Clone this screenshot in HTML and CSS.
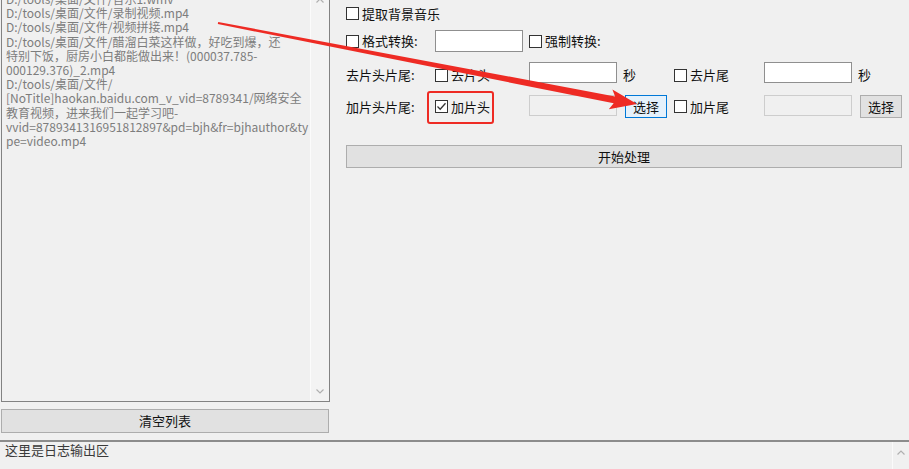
FILE: index.html
```html
<!DOCTYPE html>
<html lang="zh-CN">
<head>
  <meta charset="UTF-8">
  <meta name="viewport" content="width=device-width, initial-scale=1.0">
  <title>视频处理工具</title>
  <link rel="stylesheet" href="styles.css">
</head>
<body>
  <div class="main">
    <div class="left">
      <div class="listbox">
        <div class="list">
          <div class="items">
            <div>D:/tools/桌面/文件/音乐1.wmv</div>
            <div>D:/tools/桌面/文件/录制视频.mp4</div>
            <div>D:/tools/桌面/文件/视频拼接.mp4</div>
            <div>D:/tools/桌面/文件/醋溜白菜这样做，好吃到爆，还</div>
            <div>特别下饭，厨房小白都能做出来！(000037.785-</div>
            <div>000129.376)_2.mp4</div>
            <div>D:/tools/桌面/文件/</div>
            <div>[NoTitle]haokan.baidu.com_v_vid=8789341/网络安全</div>
            <div>教育视频，进来我们一起学习吧-</div>
            <div>vvid=8789341316951812897&amp;pd=bjh&amp;fr=bjhauthor&amp;ty</div>
            <div>pe=video.mp4</div>
          </div>
        </div>
        <div class="vscroll">
          <svg class="chev up" width="8" height="5" viewBox="0 0 8 5"><polyline points="0.5,4.5 4,1 7.5,4.5" /></svg>
          <svg class="chev down" width="8" height="5" viewBox="0 0 8 5"><polyline points="0.5,0.5 4,4 7.5,0.5" /></svg>
        </div>
      </div>
      <button class="btn clear">清空列表</button>
    </div>

    <div class="right">
      <div class="row r1">
        <label class="check span3"><span class="box"></span>提取背景音乐</label>
      </div>
      <div class="row r2">
        <label class="check"><span class="box"></span>格式转换:</label>
        <span class="txt"></span>
        <label class="check span2"><span class="box"></span>强制转换:</label>
      </div>
      <div class="row r3">
        <span class="lbl">去片头片尾:</span>
        <label class="check"><span class="box"></span>去片头</label>
        <span class="txt"></span>
        <span class="lbl">秒</span>
        <label class="check"><span class="box"></span>去片尾</label>
        <span class="txt"></span>
        <span class="lbl">秒</span>
      </div>
      <div class="row r4">
        <span class="lbl">加片头片尾:</span>
        <label class="check"><span class="box on"><svg width="11" height="11" viewBox="0 0 11 11"><polyline points="1.5,5.5 4.2,8.2 9.5,2.2" /></svg></span>加片头</label>
        <span class="txt off"></span>
        <button class="btn pick hot">选择</button>
        <label class="check"><span class="box"></span>加片尾</label>
        <span class="txt off"></span>
        <button class="btn pick">选择</button>
        <span class="mark"></span>
      </div>
      <button class="btn start">开始处理</button>
    </div>
  </div>

  <div class="log">
    <div class="log-text">这里是日志输出区</div>
    <div class="log-scroll">
      <svg class="chev up" width="8" height="5" viewBox="0 0 8 5"><polyline points="0.5,4.5 4,1 7.5,4.5" /></svg>
    </div>
  </div>

  <svg class="annot" width="909" height="469" viewBox="0 0 909 469">
    <polygon points="218.2,22.0 615.1,96.4 612.4,89.6 637,104 608.8,109.2 613.7,103.3 217.8,24.0" />
  </svg>
</body>
</html>
```

FILE: styles.css
```css
* {
  box-sizing: border-box;
}
body {
  margin: 0;
  width: 909px;
  height: 469px;
  overflow: hidden;
  position: relative;
  background: #f0f0f0;
  color: #111;
  font-family: "Noto Sans CJK SC", "Noto Sans", sans-serif;
  font-size: 13px;
  line-height: 18px;
}
.main {
  display: flex;
  height: 440px;
  padding-left: 1px;
}

/* file list */
.left {
  width: 329px;
  display: flex;
  flex-direction: column;
}
.listbox {
  height: 402px;
  display: flex;
  border: 1px solid #828282;
  border-top: none;
}
.list {
  flex: 1;
  overflow: hidden;
  padding-left: 4px;
  font-size: 12px;
  line-height: 14.2px;
  color: #7d7d7d;
  white-space: nowrap;
}
.items {
  margin-top: -8px;
}
.vscroll {
  width: 19px;
  background: #f3f3f3;
  border-left: 1px solid #fbfbfb;
  display: flex;
  flex-direction: column;
  justify-content: space-between;
  align-items: center;
}
.chev polyline {
  fill: none;
  stroke: #b0b0b0;
  stroke-width: 1.2;
}
.vscroll .up {
  margin-top: -2px;
}
.vscroll .down {
  margin-bottom: 7px;
}

.btn {
  font: inherit;
  font-size: 13px;
  color: #111;
  background: #e1e1e1;
  border: 1px solid #adadad;
  padding: 0;
}
.btn.hot {
  background: #e5f1fb;
  border-color: #0078d7;
}
.clear {
  margin-top: 7px;
  height: 24px;
  width: 328px;
}

/* options */
.right {
  flex: 1;
  padding: 3px 7px 0 16px;
}
.row {
  display: grid;
  grid-template-columns: 89px 94px 94px 51px 90px 94px 1fr;
  align-items: center;
  position: relative;
}
.r1 {
  height: 21px;
}
.r2 {
  margin-top: 6px;
  height: 22px;
}
.r3 {
  margin-top: 10px;
  height: 26px;
}
.r3 .txt {
  align-self: start;
  height: 21px;
}
.r4 {
  margin-top: 7px;
  height: 23px;
}
.r4 .txt {
  align-self: start;
  height: 21px;
}
.span3 {
  grid-column: span 3;
}
.span2 {
  grid-column: span 2;
}
.check {
  display: flex;
  align-items: center;
  gap: 3px;
  white-space: nowrap;
}
.box {
  width: 13px;
  height: 13px;
  border: 1px solid #333;
  background: #fff;
  display: flex;
}
.box polyline {
  fill: none;
  stroke: #333;
  stroke-width: 1.3;
}
.lbl {
  white-space: nowrap;
}
.txt {
  width: 88px;
  height: 22px;
  border: 1px solid #8f8f8f;
  background: #fff;
}
.txt.off {
  background: #f0f0f0;
  border-color: #cdcdcd;
}
.pick {
  margin-left: 2px;
  width: 42px;
  height: 23px;
}
.mark {
  position: absolute;
  left: 81px;
  top: -4px;
  width: 67px;
  height: 33px;
  border: 2px solid #ee2b24;
  border-radius: 3px;
}
.start {
  display: block;
  margin-top: 27px;
  height: 23px;
  width: 556px;
}

/* log */
.log {
  display: flex;
  height: 29px;
  border-top: 2px solid #8c8c8c;
}
.log-text {
  flex: 1;
  padding: 0 0 0 5px;
  line-height: 16px;
  color: #3a3a3a;
}
.log-scroll {
  width: 17px;
  border-left: 1px solid #fafafa;
  display: flex;
  justify-content: center;
  padding-top: 8px;
}

.annot {
  position: absolute;
  top: 0;
  left: 0;
  pointer-events: none;
}
.annot polygon {
  fill: #ee2b24;
}
```
